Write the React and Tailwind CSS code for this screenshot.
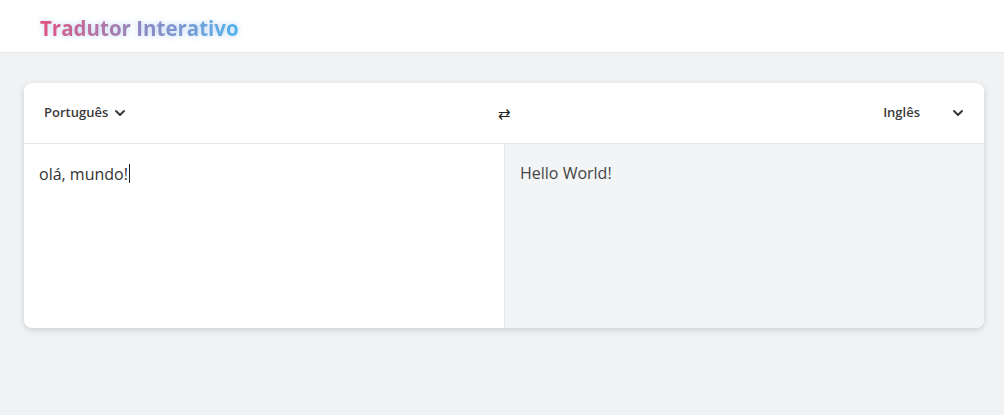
import { ChevronDown } from "lucide-react";

export default function App() {
  return (
    <div
      className="min-h-[415px] bg-[#f1f2f4] text-[#333]"
      style={{ fontFamily: '"Open Sans", "Noto Sans", sans-serif' }}
    >
      <header className="flex h-[53px] items-center border-b border-[#e5e7eb] bg-white px-10">
        <h1 className="translate-y-[2px] bg-gradient-to-r from-[#e24d7c] via-[#8d86c0] to-[#4bb3ec] bg-clip-text text-[20.5px] font-bold text-transparent [filter:drop-shadow(0_0_3px_rgba(120,170,230,0.5))]">
          Tradutor Interativo
        </h1>
      </header>
      <main className="pl-6 pr-5 pt-[30px]">
        <div className="overflow-hidden rounded-lg bg-white shadow-[0_2px_6px_rgba(0,0,0,0.15)]">
          <div className="grid h-[61px] grid-cols-3 items-center border-b border-[#e5e7eb] pl-5 pr-[18px]">
            <button className="flex items-center gap-1 justify-self-start text-[13px] font-[550] text-[#3a3a3a]">
              Português
              <ChevronDown size={16} strokeWidth={3} />
            </button>
            <span className="justify-self-center text-[15px] text-[#222]">⇄</span>
            <div className="flex items-center gap-[30px] justify-self-end text-[13px] font-[550] text-[#3a3a3a]">
              Inglês
              <ChevronDown size={16} strokeWidth={3} />
            </div>
          </div>
          <div className="grid h-[184px] grid-cols-2">
            <div className="px-[15px] pt-[17px] text-[16px] text-[#333]">
              olá, mundo!<span className="ml-px inline-block h-[19px] w-px translate-y-[3px] bg-[#222]" />
            </div>
            <div className="border-l border-[#e5e7eb] bg-[#f3f4f6] px-[15px] pt-[17px] text-[16px] text-[#444]">
              Hello World!
            </div>
          </div>
        </div>
      </main>
    </div>
  );
}
